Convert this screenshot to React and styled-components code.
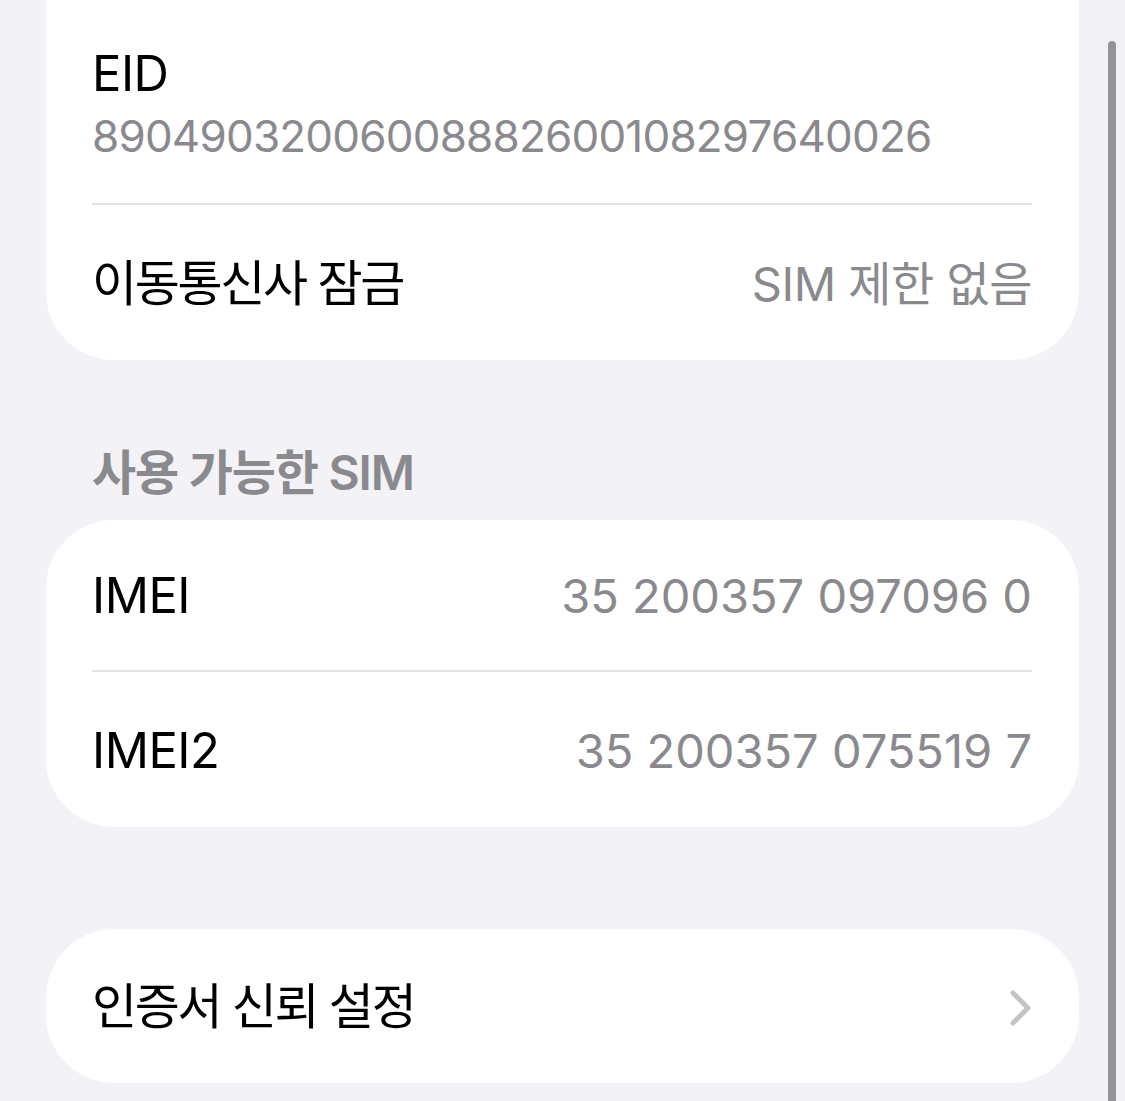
import React from "react";
import styled, { createGlobalStyle } from "styled-components";

const GlobalStyle = createGlobalStyle`
  html, body {
    margin: 0;
    padding: 0;
    background: #f2f2f7;
  }
  body {
    font-family: "Inter", "Noto Sans CJK KR", sans-serif;
    -webkit-font-smoothing: antialiased;
  }
`;

const Screen = styled.div`
  position: relative;
  width: 1125px;
  height: 1101px;
  overflow: hidden;
  background: #f2f2f7;
`;

// the list is scrolled, so its first card starts above the top edge
const ScrollContent = styled.div`
  display: flex;
  flex-direction: column;
  margin-top: -120px;
  padding: 0 46px;
`;

const Card = styled.section`
  background: #fff;
  border-radius: 68px;
  padding: 0 47px 0 46px;
  margin-bottom: ${(p) => p.$gap || 0}px;
`;

const Row = styled.div`
  display: flex;
  align-items: center;
  justify-content: space-between;
  height: ${(p) => p.$height || 152}px;
  padding-top: 3px;
  box-sizing: border-box;
  border-bottom: ${(p) => (p.$divider ? "2px solid #e3e3e6" : "none")};
`;

const StackRow = styled(Row)`
  flex-direction: column;
  align-items: flex-start;
  justify-content: flex-end;
  padding-bottom: 40px;
`;

const Label = styled.span`
  font-size: 49px;
  line-height: 1.2;
  color: #000;
  letter-spacing: ${(p) => (p.$ko ? "-2.3px" : "-0.5px")};
`;

const Value = styled.span`
  font-size: 47px;
  line-height: 1.2;
  color: #8a8a8e;
  letter-spacing: ${(p) => (p.$ko ? "-0.5px" : "0")};
`;

const SubValue = styled.span`
  font-size: 44px;
  line-height: 1.2;
  color: #8a8a8e;
  margin-top: 6px;
  letter-spacing: -0.8px;
`;

const SectionHeader = styled.h3`
  margin: 0;
  padding: 0 0 17px 46px;
  font-size: 48px;
  line-height: 60px;
  font-weight: 600;
  color: #8a8a8e;
  letter-spacing: -1.2px;
`;

const Chevron = styled.svg`
  width: 22px;
  height: 36px;
  display: block;
`;

const ScrollIndicator = styled.div`
  position: absolute;
  top: 41px;
  right: 9px;
  width: 8px;
  height: 1200px;
  border-radius: 4px;
  background: #939398;
`;

export default function App() {
  return (
    <Screen>
      <GlobalStyle />
      <ScrollContent>
        <Card $gap={83}>
          <StackRow $height={325} $divider>
            <Label>EID</Label>
            <SubValue>89049032006008882600108297640026</SubValue>
          </StackRow>
          <Row $height={155}>
            <Label $ko>이동통신사 잠금</Label>
            <Value $ko>SIM 제한 없음</Value>
          </Row>
        </Card>

        <SectionHeader>사용 가능한 SIM</SectionHeader>
        <Card $gap={102}>
          <Row $divider>
            <Label>IMEI</Label>
            <Value>35 200357 097096 0</Value>
          </Row>
          <Row $height={155}>
            <Label>IMEI2</Label>
            <Value>35 200357 075519 7</Value>
          </Row>
        </Card>

        <Card>
          <Row $height={154}>
            <Label $ko>인증서 신뢰 설정</Label>
            <Chevron viewBox="0 0 22 36">
              <path
                d="M3 3 L18 18 L3 33"
                fill="none"
                stroke="#c4c4c7"
                strokeWidth="5"
                strokeLinecap="round"
                strokeLinejoin="round"
              />
            </Chevron>
          </Row>
        </Card>
      </ScrollContent>
      <ScrollIndicator />
    </Screen>
  );
}
